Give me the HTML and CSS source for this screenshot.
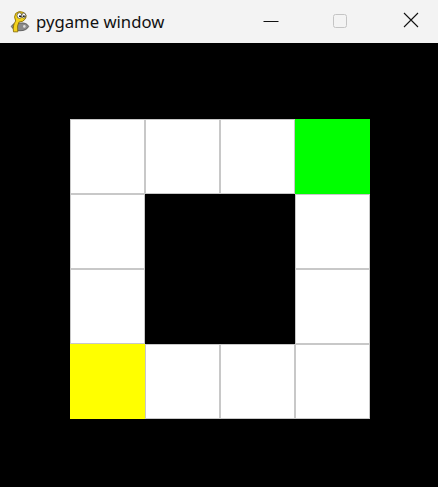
FILE: index.html
```
<!DOCTYPE html>
<html>
<head>
<meta charset="utf-8">
<link rel="stylesheet" href="styles.css">
</head>
<body>
<div class="titlebar">
  <div class="app">
    <svg class="logo" width="26" height="26" viewBox="0 0 24 24">
      <path d="M4 17 Q6 13 12 14 Q18 13 20 17 Q18 21 12 21 Q6 21 4 17Z" fill="#8a8a8a" stroke="#555" stroke-width="0.8"/>
      <circle cx="8" cy="17" r="1.6" fill="#333"/>
      <circle cx="16" cy="17" r="1.2" fill="#ddd"/>
      <path d="M6 22 Q5 16 8 12 Q6 8 8 5 Q11 2 15 4 Q19 6 17 10 Q15 13 11 13 Q9 16 10 22Z" fill="#f3d21c" stroke="#8a6d00" stroke-width="0.8"/>
      <ellipse cx="11.5" cy="7" rx="2.2" ry="2.6" fill="#fff" stroke="#333" stroke-width="0.6"/>
      <ellipse cx="15.5" cy="7" rx="1.8" ry="2.3" fill="#fff" stroke="#333" stroke-width="0.6"/>
      <circle cx="12" cy="7.5" r="0.9" fill="#000"/>
      <circle cx="15.6" cy="7.5" r="0.8" fill="#000"/>
    </svg>
    <span class="title">pygame window</span>
  </div>
  <div class="controls">
    <svg class="ctl" width="16" height="16" viewBox="0 0 16 16"><path d="M0.5 8.5H15.5" stroke="#111" stroke-width="1"/></svg>
    <svg class="ctl" width="16" height="16" viewBox="0 0 16 16"><rect x="1.5" y="1.5" width="13" height="13" rx="2" fill="none" stroke="#c4c4c4" stroke-width="1"/></svg>
    <svg class="ctl" width="16" height="16" viewBox="0 0 16 16"><path d="M1 1L15 15M15 1L1 15" stroke="#111" stroke-width="1.1"/></svg>
  </div>
</div>
<div class="content">
  <div class="grid">
    <div class="cell"></div><div class="cell"></div><div class="cell"></div><div class="cell green"></div>
    <div class="cell"></div><div class="cell black"></div><div class="cell black"></div><div class="cell"></div>
    <div class="cell"></div><div class="cell black"></div><div class="cell black"></div><div class="cell"></div>
    <div class="cell yellow"></div><div class="cell"></div><div class="cell"></div><div class="cell"></div>
  </div>
</div>
</body>
</html>
```
FILE: styles.css
```
html, body {
  margin: 0;
  padding: 0;
  background: #000;
  width: 438px;
  height: 487px;
  overflow: hidden;
}
.titlebar {
  height: 43px;
  background: #f3f3f3;
  display: flex;
  align-items: center;
  justify-content: space-between;
  font-family: "Noto Sans", "Open Sans", sans-serif;
}
.app {
  display: flex;
  align-items: center;
  padding-left: 7px;
  gap: 3px;
}
.logo {
  display: block;
  margin-top: -2px;
}
.title {
  font-size: 16.7px;
  color: #111;
  margin-top: -1px;
}
.controls {
  display: flex;
  align-items: center;
  padding-right: 19px;
  gap: 53px;
}
.ctl { display: block; margin-top: -1px; }
.ctl:last-child { margin-left: 2px; margin-top: -3px; }
.content {
  padding-top: 76px;
  padding-left: 70px;
}
.grid {
  display: grid;
  grid-template-columns: repeat(4, 75px);
  grid-template-rows: repeat(4, 75px);
  width: 300px;
}
.cell {
  background: #fff;
  box-shadow: inset 0 0 0 1px #c8c8c8;
}
.cell.black { background: #000; box-shadow: none; }
.cell.green { background: #00ff00; box-shadow: none; }
.cell.yellow { background: #ffff00; box-shadow: none; }
```
